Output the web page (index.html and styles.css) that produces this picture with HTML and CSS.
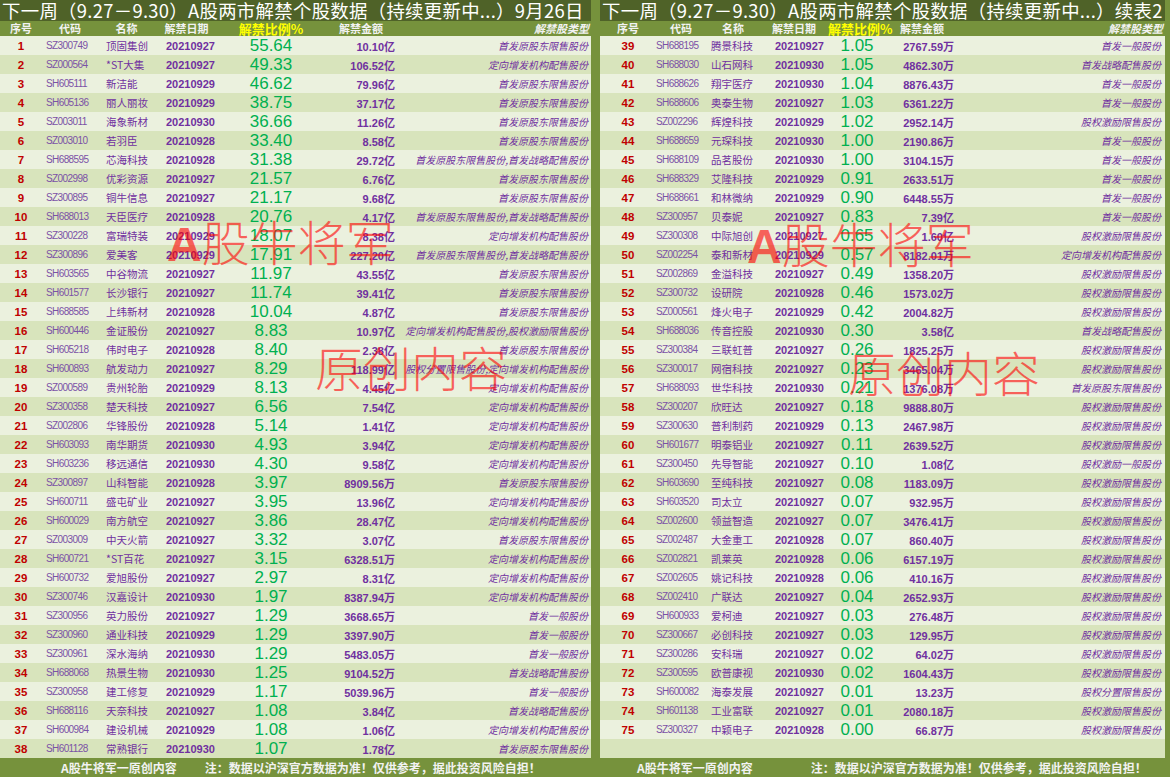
FILE: index.html
```html
<!DOCTYPE html>
<html lang="zh-CN">
<head>
<meta charset="utf-8">
<title>解禁个股数据</title>
<link rel="stylesheet" href="styles.css">
</head>
<body>
<div class="sheet">
  <section class="panel left">
    <div class="title">下一周（9.27－9.30）A股两市解禁个股数据（持续更新中...）9月26日</div>
    <div class="row head"><span class="h">序号</span><span class="h">代码</span><span class="h">名称</span><span class="h">解禁日期</span><span class="h hy">解禁比例%</span><span class="h">解禁金额</span><span class="h ht">解禁股类型</span></div>
    <div class="rows">
      <div class="row"><span class="n">1</span><span class="c">SZ300749</span><span class="m">顶固集创</span><span class="d">20210927</span><span class="p">55.64</span><span class="a">10.10亿</span><span class="t">首发原股东限售股份</span></div>
      <div class="row"><span class="n">2</span><span class="c">SZ000564</span><span class="m">*ST大集</span><span class="d">20210927</span><span class="p">49.33</span><span class="a">106.52亿</span><span class="t">定向增发机构配售股份</span></div>
      <div class="row"><span class="n">3</span><span class="c">SH605111</span><span class="m">新洁能</span><span class="d">20210929</span><span class="p">46.62</span><span class="a">79.96亿</span><span class="t">首发原股东限售股份</span></div>
      <div class="row"><span class="n">4</span><span class="c">SH605136</span><span class="m">丽人丽妆</span><span class="d">20210929</span><span class="p">38.75</span><span class="a">37.17亿</span><span class="t">首发原股东限售股份</span></div>
      <div class="row"><span class="n">5</span><span class="c">SZ003011</span><span class="m">海象新材</span><span class="d">20210930</span><span class="p">36.66</span><span class="a">11.26亿</span><span class="t">首发原股东限售股份</span></div>
      <div class="row"><span class="n">6</span><span class="c">SZ003010</span><span class="m">若羽臣</span><span class="d">20210928</span><span class="p">33.40</span><span class="a">8.58亿</span><span class="t">首发原股东限售股份</span></div>
      <div class="row"><span class="n">7</span><span class="c">SH688595</span><span class="m">芯海科技</span><span class="d">20210928</span><span class="p">31.38</span><span class="a">29.72亿</span><span class="t">首发原股东限售股份,首发战略配售股份</span></div>
      <div class="row"><span class="n">8</span><span class="c">SZ002998</span><span class="m">优彩资源</span><span class="d">20210927</span><span class="p">21.57</span><span class="a">6.76亿</span><span class="t">首发原股东限售股份</span></div>
      <div class="row"><span class="n">9</span><span class="c">SZ300895</span><span class="m">铜牛信息</span><span class="d">20210927</span><span class="p">21.17</span><span class="a">9.68亿</span><span class="t">首发原股东限售股份</span></div>
      <div class="row"><span class="n">10</span><span class="c">SH688013</span><span class="m">天臣医疗</span><span class="d">20210928</span><span class="p">20.76</span><span class="a">4.17亿</span><span class="t">首发原股东限售股份,首发战略配售股份</span></div>
      <div class="row"><span class="n">11</span><span class="c">SZ300228</span><span class="m">富瑞特装</span><span class="d">20210929</span><span class="p">18.07</span><span class="a">8.38亿</span><span class="t">定向增发机构配售股份</span></div>
      <div class="row"><span class="n">12</span><span class="c">SZ300896</span><span class="m">爱美客</span><span class="d">20210929</span><span class="p">17.91</span><span class="a">227.20亿</span><span class="t">首发原股东限售股份,首发战略配售股份</span></div>
      <div class="row"><span class="n">13</span><span class="c">SH603565</span><span class="m">中谷物流</span><span class="d">20210927</span><span class="p">11.97</span><span class="a">43.55亿</span><span class="t">首发原股东限售股份</span></div>
      <div class="row"><span class="n">14</span><span class="c">SH601577</span><span class="m">长沙银行</span><span class="d">20210927</span><span class="p">11.74</span><span class="a">39.41亿</span><span class="t">首发原股东限售股份</span></div>
      <div class="row"><span class="n">15</span><span class="c">SH688585</span><span class="m">上纬新材</span><span class="d">20210928</span><span class="p">10.04</span><span class="a">4.87亿</span><span class="t">首发原股东限售股份</span></div>
      <div class="row"><span class="n">16</span><span class="c">SH600446</span><span class="m">金证股份</span><span class="d">20210927</span><span class="p">8.83</span><span class="a">10.97亿</span><span class="t">定向增发机构配售股份,股权激励限售股份</span></div>
      <div class="row"><span class="n">17</span><span class="c">SH605218</span><span class="m">伟时电子</span><span class="d">20210928</span><span class="p">8.40</span><span class="a">2.38亿</span><span class="t">首发原股东限售股份</span></div>
      <div class="row"><span class="n">18</span><span class="c">SH600893</span><span class="m">航发动力</span><span class="d">20210927</span><span class="p">8.29</span><span class="a">118.99亿</span><span class="t">股权分置限售股份,定向增发机构配售股份</span></div>
      <div class="row"><span class="n">19</span><span class="c">SZ000589</span><span class="m">贵州轮胎</span><span class="d">20210929</span><span class="p">8.13</span><span class="a">4.45亿</span><span class="t">定向增发机构配售股份</span></div>
      <div class="row"><span class="n">20</span><span class="c">SZ300358</span><span class="m">楚天科技</span><span class="d">20210927</span><span class="p">6.56</span><span class="a">7.54亿</span><span class="t">定向增发机构配售股份</span></div>
      <div class="row"><span class="n">21</span><span class="c">SZ002806</span><span class="m">华锋股份</span><span class="d">20210928</span><span class="p">5.14</span><span class="a">1.41亿</span><span class="t">定向增发机构配售股份</span></div>
      <div class="row"><span class="n">22</span><span class="c">SH603093</span><span class="m">南华期货</span><span class="d">20210930</span><span class="p">4.93</span><span class="a">3.94亿</span><span class="t">定向增发机构配售股份</span></div>
      <div class="row"><span class="n">23</span><span class="c">SH603236</span><span class="m">移远通信</span><span class="d">20210930</span><span class="p">4.30</span><span class="a">9.58亿</span><span class="t">定向增发机构配售股份</span></div>
      <div class="row"><span class="n">24</span><span class="c">SZ300897</span><span class="m">山科智能</span><span class="d">20210928</span><span class="p">3.97</span><span class="a">8909.56万</span><span class="t">首发原股东限售股份</span></div>
      <div class="row"><span class="n">25</span><span class="c">SH600711</span><span class="m">盛屯矿业</span><span class="d">20210927</span><span class="p">3.95</span><span class="a">13.96亿</span><span class="t">定向增发机构配售股份</span></div>
      <div class="row"><span class="n">26</span><span class="c">SH600029</span><span class="m">南方航空</span><span class="d">20210927</span><span class="p">3.86</span><span class="a">28.47亿</span><span class="t">定向增发机构配售股份</span></div>
      <div class="row"><span class="n">27</span><span class="c">SZ003009</span><span class="m">中天火箭</span><span class="d">20210927</span><span class="p">3.32</span><span class="a">3.07亿</span><span class="t">首发原股东限售股份</span></div>
      <div class="row"><span class="n">28</span><span class="c">SH600721</span><span class="m">*ST百花</span><span class="d">20210927</span><span class="p">3.15</span><span class="a">6328.51万</span><span class="t">定向增发机构配售股份</span></div>
      <div class="row"><span class="n">29</span><span class="c">SH600732</span><span class="m">爱旭股份</span><span class="d">20210927</span><span class="p">2.97</span><span class="a">8.31亿</span><span class="t">定向增发机构配售股份</span></div>
      <div class="row"><span class="n">30</span><span class="c">SZ300746</span><span class="m">汉嘉设计</span><span class="d">20210930</span><span class="p">1.97</span><span class="a">8387.94万</span><span class="t">定向增发机构配售股份</span></div>
      <div class="row"><span class="n">31</span><span class="c">SZ300956</span><span class="m">英力股份</span><span class="d">20210927</span><span class="p">1.29</span><span class="a">3668.65万</span><span class="t">首发一般股份</span></div>
      <div class="row"><span class="n">32</span><span class="c">SZ300960</span><span class="m">通业科技</span><span class="d">20210929</span><span class="p">1.29</span><span class="a">3397.90万</span><span class="t">首发一般股份</span></div>
      <div class="row"><span class="n">33</span><span class="c">SZ300961</span><span class="m">深水海纳</span><span class="d">20210930</span><span class="p">1.29</span><span class="a">5483.05万</span><span class="t">首发一般股份</span></div>
      <div class="row"><span class="n">34</span><span class="c">SH688068</span><span class="m">热景生物</span><span class="d">20210930</span><span class="p">1.25</span><span class="a">9104.52万</span><span class="t">首发战略配售股份</span></div>
      <div class="row"><span class="n">35</span><span class="c">SZ300958</span><span class="m">建工修复</span><span class="d">20210929</span><span class="p">1.17</span><span class="a">5039.96万</span><span class="t">首发一般股份</span></div>
      <div class="row"><span class="n">36</span><span class="c">SH688116</span><span class="m">天奈科技</span><span class="d">20210927</span><span class="p">1.08</span><span class="a">3.84亿</span><span class="t">首发战略配售股份</span></div>
      <div class="row"><span class="n">37</span><span class="c">SH600984</span><span class="m">建设机械</span><span class="d">20210929</span><span class="p">1.08</span><span class="a">1.06亿</span><span class="t">定向增发机构配售股份</span></div>
      <div class="row"><span class="n">38</span><span class="c">SH601128</span><span class="m">常熟银行</span><span class="d">20210930</span><span class="p">1.07</span><span class="a">1.78亿</span><span class="t">首发原股东限售股份</span></div>
    </div>
    <div class="foot"><span>A股牛将军一原创内容</span><span class="note">注：数据以沪深官方数据为准！仅供参考，据此投资风险自担！</span></div>
  </section>

  <section class="panel right">
    <div class="title">下一周（9.27－9.30）A股两市解禁个股数据（持续更新中...）续表2</div>
    <div class="row head"><span class="h">序号</span><span class="h">代码</span><span class="h">名称</span><span class="h">解禁日期</span><span class="h hy">解禁比例%</span><span class="h">解禁金额</span><span class="h ht">解禁股类型</span></div>
    <div class="rows">
      <div class="row"><span class="n">39</span><span class="c">SH688195</span><span class="m">腾景科技</span><span class="d">20210927</span><span class="p">1.05</span><span class="a">2767.59万</span><span class="t">首发一般股份</span></div>
      <div class="row"><span class="n">40</span><span class="c">SH688030</span><span class="m">山石网科</span><span class="d">20210930</span><span class="p">1.05</span><span class="a">4862.30万</span><span class="t">首发战略配售股份</span></div>
      <div class="row"><span class="n">41</span><span class="c">SH688626</span><span class="m">翔宇医疗</span><span class="d">20210930</span><span class="p">1.04</span><span class="a">8876.43万</span><span class="t">首发一般股份</span></div>
      <div class="row"><span class="n">42</span><span class="c">SH688606</span><span class="m">奥泰生物</span><span class="d">20210927</span><span class="p">1.03</span><span class="a">6361.22万</span><span class="t">首发一般股份</span></div>
      <div class="row"><span class="n">43</span><span class="c">SZ002296</span><span class="m">辉煌科技</span><span class="d">20210929</span><span class="p">1.02</span><span class="a">2952.14万</span><span class="t">股权激励限售股份</span></div>
      <div class="row"><span class="n">44</span><span class="c">SH688659</span><span class="m">元琛科技</span><span class="d">20210930</span><span class="p">1.00</span><span class="a">2190.86万</span><span class="t">首发一般股份</span></div>
      <div class="row"><span class="n">45</span><span class="c">SH688109</span><span class="m">品茗股份</span><span class="d">20210930</span><span class="p">1.00</span><span class="a">3104.15万</span><span class="t">首发一般股份</span></div>
      <div class="row"><span class="n">46</span><span class="c">SH688329</span><span class="m">艾隆科技</span><span class="d">20210929</span><span class="p">0.91</span><span class="a">2633.51万</span><span class="t">首发一般股份</span></div>
      <div class="row"><span class="n">47</span><span class="c">SH688661</span><span class="m">和林微纳</span><span class="d">20210929</span><span class="p">0.90</span><span class="a">6448.55万</span><span class="t">首发一般股份</span></div>
      <div class="row"><span class="n">48</span><span class="c">SZ300957</span><span class="m">贝泰妮</span><span class="d">20210927</span><span class="p">0.83</span><span class="a">7.39亿</span><span class="t">首发一般股份</span></div>
      <div class="row"><span class="n">49</span><span class="c">SZ300308</span><span class="m">中际旭创</span><span class="d">20210927</span><span class="p">0.65</span><span class="a">1.60亿</span><span class="t">股权激励限售股份</span></div>
      <div class="row"><span class="n">50</span><span class="c">SZ002254</span><span class="m">泰和新材</span><span class="d">20210929</span><span class="p">0.57</span><span class="a">8182.01万</span><span class="t">定向增发机构配售股份</span></div>
      <div class="row"><span class="n">51</span><span class="c">SZ002869</span><span class="m">金溢科技</span><span class="d">20210927</span><span class="p">0.49</span><span class="a">1358.20万</span><span class="t">股权激励限售股份</span></div>
      <div class="row"><span class="n">52</span><span class="c">SZ300732</span><span class="m">设研院</span><span class="d">20210928</span><span class="p">0.46</span><span class="a">1573.02万</span><span class="t">股权激励限售股份</span></div>
      <div class="row"><span class="n">53</span><span class="c">SZ000561</span><span class="m">烽火电子</span><span class="d">20210929</span><span class="p">0.42</span><span class="a">2004.82万</span><span class="t">股权激励限售股份</span></div>
      <div class="row"><span class="n">54</span><span class="c">SH688036</span><span class="m">传音控股</span><span class="d">20210930</span><span class="p">0.30</span><span class="a">3.58亿</span><span class="t">首发战略配售股份</span></div>
      <div class="row"><span class="n">55</span><span class="c">SZ300384</span><span class="m">三联虹普</span><span class="d">20210927</span><span class="p">0.26</span><span class="a">1825.25万</span><span class="t">股权激励限售股份</span></div>
      <div class="row"><span class="n">56</span><span class="c">SZ300017</span><span class="m">网宿科技</span><span class="d">20210927</span><span class="p">0.23</span><span class="a">3465.04万</span><span class="t">股权激励限售股份</span></div>
      <div class="row"><span class="n">57</span><span class="c">SH688093</span><span class="m">世华科技</span><span class="d">20210930</span><span class="p">0.21</span><span class="a">1376.08万</span><span class="t">首发原股东限售股份</span></div>
      <div class="row"><span class="n">58</span><span class="c">SZ300207</span><span class="m">欣旺达</span><span class="d">20210927</span><span class="p">0.18</span><span class="a">9888.80万</span><span class="t">股权激励限售股份</span></div>
      <div class="row"><span class="n">59</span><span class="c">SZ300630</span><span class="m">普利制药</span><span class="d">20210929</span><span class="p">0.13</span><span class="a">2467.98万</span><span class="t">股权激励限售股份</span></div>
      <div class="row"><span class="n">60</span><span class="c">SH601677</span><span class="m">明泰铝业</span><span class="d">20210927</span><span class="p">0.11</span><span class="a">2639.52万</span><span class="t">股权激励限售股份</span></div>
      <div class="row"><span class="n">61</span><span class="c">SZ300450</span><span class="m">先导智能</span><span class="d">20210927</span><span class="p">0.10</span><span class="a">1.08亿</span><span class="t">股权激励一般股份</span></div>
      <div class="row"><span class="n">62</span><span class="c">SH603690</span><span class="m">至纯科技</span><span class="d">20210927</span><span class="p">0.08</span><span class="a">1183.09万</span><span class="t">股权激励限售股份</span></div>
      <div class="row"><span class="n">63</span><span class="c">SH603520</span><span class="m">司太立</span><span class="d">20210927</span><span class="p">0.07</span><span class="a">932.95万</span><span class="t">股权激励限售股份</span></div>
      <div class="row"><span class="n">64</span><span class="c">SZ002600</span><span class="m">领益智造</span><span class="d">20210927</span><span class="p">0.07</span><span class="a">3476.41万</span><span class="t">股权激励限售股份</span></div>
      <div class="row"><span class="n">65</span><span class="c">SZ002487</span><span class="m">大金重工</span><span class="d">20210928</span><span class="p">0.07</span><span class="a">860.40万</span><span class="t">股权激励限售股份</span></div>
      <div class="row"><span class="n">66</span><span class="c">SZ002821</span><span class="m">凯莱英</span><span class="d">20210928</span><span class="p">0.06</span><span class="a">6157.19万</span><span class="t">股权激励限售股份</span></div>
      <div class="row"><span class="n">67</span><span class="c">SZ002605</span><span class="m">姚记科技</span><span class="d">20210928</span><span class="p">0.06</span><span class="a">410.16万</span><span class="t">股权激励限售股份</span></div>
      <div class="row"><span class="n">68</span><span class="c">SZ002410</span><span class="m">广联达</span><span class="d">20210927</span><span class="p">0.04</span><span class="a">2652.93万</span><span class="t">股权激励限售股份</span></div>
      <div class="row"><span class="n">69</span><span class="c">SH600933</span><span class="m">爱柯迪</span><span class="d">20210927</span><span class="p">0.03</span><span class="a">276.48万</span><span class="t">股权激励限售股份</span></div>
      <div class="row"><span class="n">70</span><span class="c">SZ300667</span><span class="m">必创科技</span><span class="d">20210927</span><span class="p">0.03</span><span class="a">129.95万</span><span class="t">股权激励限售股份</span></div>
      <div class="row"><span class="n">71</span><span class="c">SZ300286</span><span class="m">安科瑞</span><span class="d">20210927</span><span class="p">0.02</span><span class="a">64.02万</span><span class="t">股权激励限售股份</span></div>
      <div class="row"><span class="n">72</span><span class="c">SZ300595</span><span class="m">欧普康视</span><span class="d">20210930</span><span class="p">0.02</span><span class="a">1604.43万</span><span class="t">股权激励限售股份</span></div>
      <div class="row"><span class="n">73</span><span class="c">SH600082</span><span class="m">海泰发展</span><span class="d">20210927</span><span class="p">0.01</span><span class="a">13.23万</span><span class="t">股权分置限售股份</span></div>
      <div class="row"><span class="n">74</span><span class="c">SH601138</span><span class="m">工业富联</span><span class="d">20210927</span><span class="p">0.01</span><span class="a">2080.18万</span><span class="t">股权激励限售股份</span></div>
      <div class="row"><span class="n">75</span><span class="c">SZ300327</span><span class="m">中颖电子</span><span class="d">20210928</span><span class="p">0.00</span><span class="a">66.87万</span><span class="t">股权激励限售股份</span></div>
      <div class="row"></div>
    </div>
    <div class="foot"><span>A股牛将军一原创内容</span><span class="note">注：数据以沪深官方数据为准！仅供参考，据此投资风险自担！</span></div>
  </section>

  <div class="wm wm-l1"><span class="wa">A</span>股牛将军</div>
  <div class="wm wm-l2">原创内容</div>
  <div class="wm wm-r1"><span class="wa">A</span>股牛将军</div>
  <div class="wm wm-r2">原创内容</div>
</div>
</body>
</html>
```

FILE: styles.css
```css
* { box-sizing: border-box; margin: 0; padding: 0; }
html, body { width: 1170px; height: 780px; overflow: hidden; }
body {
  background: #ffffff;
  font-family: "Noto Sans CJK SC", sans-serif;
}

.sheet {
  position: relative;
  display: flex;
  gap: 9px;
  height: 777px;
  padding-right: 5px;
  background: #76923c;
}

.panel { display: flex; flex-direction: column; }
.left {
  width: 591px;
  --cols: 42px 56px 57px 63px 106px 74px 1fr;
  --code-pad: 4px;
  --name-pad: 8px;
  --date-pad: 11px;
  --amt-pad: 3px;
  --type-pad: 3px;
  --foot-pad: 61px;
  --note-gap: 28px;
}
.right {
  width: 565px;
  --cols: 56px 50px 54px 68px 58px 72px 1fr;
  --code-pad: 0px;
  --name-pad: 5px;
  --date-pad: 15px;
  --amt-pad: 4px;
  --type-pad: 4px;
  --foot-pad: 37px;
  --note-gap: 58px;
}

.title {
  display: flex;
  align-items: center;
  height: 21px;
  background: #4f6228;
  color: #ffffff;
  font-size: 18.4px;
  line-height: 21px;
  letter-spacing: 0.3px;
  padding-left: 2px;
  white-space: nowrap;
}

.row {
  display: grid;
  grid-template-columns: var(--cols);
  align-items: center;
  height: 19px;
  white-space: nowrap;
}
.rows .row:nth-child(odd) { background: #ebf1de; }
.rows .row:nth-child(even) { background: #d8e4bc; }

.head { height: 15px; }
.h {
  text-align: center;
  color: #f2f2f2;
  font-size: 11px;
  font-weight: 700;
  line-height: 15px;
}
.hy { color: #ffff00; font-size: 13px; }
.ht { text-align: right; font-style: italic; padding-right: 2px; }

.n {
  text-align: center;
  color: #c00000;
  font-family: "Liberation Sans", "Noto Sans CJK SC", sans-serif;
  font-weight: 700;
  font-size: 11.5px;
}
.c {
  padding-left: var(--code-pad);
  color: #7b52a6;
  font-family: "Liberation Sans", "Noto Sans CJK SC", sans-serif;
  font-size: 10px;
  letter-spacing: -0.6px;
}
.m {
  padding-left: var(--name-pad);
  color: #7030a0;
  font-size: 10.5px;
}
.d {
  padding-left: var(--date-pad);
  color: #7030a0;
  font-family: "Liberation Sans", "Noto Sans CJK SC", sans-serif;
  font-weight: 700;
  font-size: 11px;
}
.p {
  text-align: center;
  color: #00b050;
  font-family: "Liberation Sans", sans-serif;
  font-size: 17px;
  line-height: 19px;
}
.a {
  text-align: right;
  padding-right: var(--amt-pad);
  color: #7030a0;
  font-family: "Liberation Sans", "Noto Sans CJK SC", sans-serif;
  font-weight: 700;
  font-size: 11px;
}
.t {
  display: flex;
  justify-content: flex-end;
  padding-right: var(--type-pad);
  color: #7030a0;
  font-size: 10px;
  font-style: italic;
}

.foot {
  display: flex;
  align-items: center;
  height: 19px;
  padding-left: var(--foot-pad);
  color: #f2f2f2;
  font-size: 12px;
  font-weight: 700;
  white-space: nowrap;
}
.note { margin-left: var(--note-gap); }

.wm {
  position: absolute;
  color: rgba(255, 0, 0, 0.6);
  font-size: 48px;
  line-height: 48px;
  font-weight: 300;
  white-space: nowrap;
  pointer-events: none;
}
.wa {
  font-family: "Liberation Sans", sans-serif;
  font-weight: 700;
}
.wm-l1 { left: 167px; top: 216px; }
.wm-l2 { left: 315px; top: 342px; }
.wm-r1 { left: 747px; top: 218px; }
.wm-r2 { left: 848px; top: 347px; }
```
